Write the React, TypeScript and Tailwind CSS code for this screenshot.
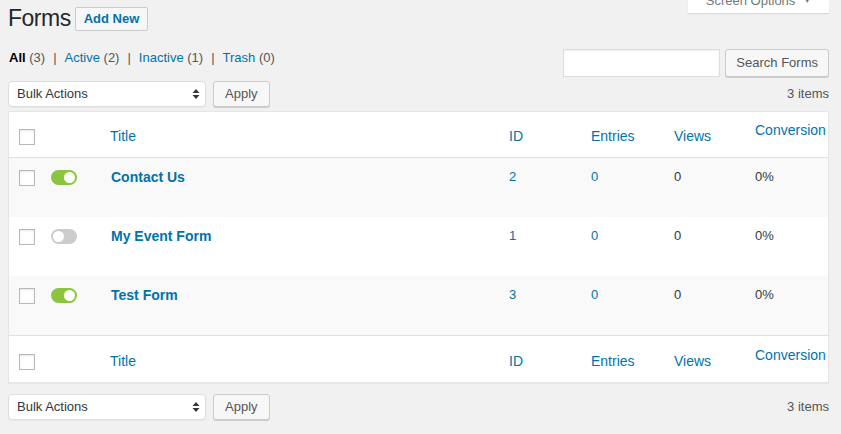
import React from "react";

const FONT = "font-['Liberation_Sans',Arial,sans-serif]";

type Form = { title: string; active: boolean; id: number; entries: number; views: number; conversion: string };

const forms: Form[] = [
  { title: "Contact Us", active: true, id: 2, entries: 0, views: 0, conversion: "0%" },
  { title: "My Event Form", active: false, id: 1, entries: 0, views: 0, conversion: "0%" },
  { title: "Test Form", active: true, id: 3, entries: 0, views: 0, conversion: "0%" },
];

const COLS = "grid grid-cols-[32px_59px_399px_82px_83px_81px_83px]";

function Checkbox() {
  return (
    <div className="w-4 h-4 bg-white border border-[#b4b9be] shadow-[inset_0_1px_2px_rgba(0,0,0,0.1)]" />
  );
}

function Toggle({ on }: { on: boolean }) {
  return (
    <div
      className={`w-[26px] h-[15px] rounded-full flex items-center px-[2px] ${
        on ? "bg-[#8bc53f] justify-end" : "bg-[#cccccc] justify-start"
      }`}
    >
      <div className="w-[11px] h-[11px] rounded-full bg-white" />
    </div>
  );
}

function BulkActions() {
  return (
    <div className="flex items-center gap-[7px]">
      <div className="w-[198px] h-[26px] bg-white border border-[#dddddd] rounded-[4px] shadow-[0_1px_1px_rgba(0,0,0,0.04)] flex items-center justify-between pl-[8px] pr-[5px]">
        <span className="text-[13px] text-[#32373c]">Bulk Actions</span>
        <svg width="8" height="12" viewBox="0 0 8 12" className="text-[#32373c]">
          <path d="M4 1 L7.5 5 L0.5 5 Z" fill="currentColor" />
          <path d="M4 11 L7.5 7 L0.5 7 Z" fill="currentColor" />
        </svg>
      </div>
      <button className="h-[26px] px-[11px] mt-px bg-[#f7f7f7] border border-[#cccccc] rounded-[3px] shadow-[0_1px_0_#cccccc] text-[13px] text-[#555555]">
        Apply
      </button>
    </div>
  );
}

function HeaderRow({ top }: { top: boolean }) {
  return (
    <div
      className={`${COLS} items-center text-[14px] text-[#0073aa] border-[#e1e1e1] ${
        top ? "h-[46px] pt-[4px] border-b" : "h-[47px] pt-[5px] border-t"
      }`}
    >
      <div className="pl-[10px]">
        <Checkbox />
      </div>
      <div />
      <div className="pl-[10px]">Title</div>
      <div className="pl-[10px]">ID</div>
      <div className="pl-[10px]">Entries</div>
      <div className="pl-[10px]">Views</div>
      <div className="pl-[10px] mb-[12px]">Conversion</div>
    </div>
  );
}

export default function App() {
  return (
    <div className={`${FONT} min-h-[434px] bg-[#f1f1f1] pl-[8px] pr-[12px] text-[13px] text-[#555555]`}>
      {/* Heading */}
      <div className="flex items-start justify-between h-[33px]">
        <div className="flex items-start">
          <h1 className="mt-[4px] text-[23px] leading-[29px] tracking-[-0.5px] text-[#23282d]">Forms</h1>
          <button className="ml-[4px] mt-[7px] h-[24px] px-[8px] bg-[#f7f7f7] border border-[#cccccc] rounded-[2px] text-[13px] font-bold text-[#0073aa]">
            Add New
          </button>
        </div>
        <div className="w-[141px] h-[13px] overflow-hidden bg-white shadow-[0_1px_1px_rgba(0,0,0,0.1)] flex justify-center">
          <div className="-mt-[12px] leading-[18px] text-[13px] text-[#72777c] flex items-center gap-[8px]">
            <span>Screen Options</span>
            <span className="text-[8px]">▼</span>
          </div>
        </div>
      </div>

      {/* Views + search */}
      <div className="mt-[16px] flex items-start justify-between">
        <div className="-mt-px h-[20px] leading-[20px] pl-px text-[13px]">
          <span className="font-bold text-black">All</span> <span>(3)</span>
          <span className="mx-[8px]">|</span>
          <span className="text-[#0073aa]">Active</span> <span>(2)</span>
          <span className="mx-[8px]">|</span>
          <span className="text-[#0073aa]">Inactive</span> <span>(1)</span>
          <span className="mx-[8px]">|</span>
          <span className="text-[#0073aa]">Trash</span> <span>(0)</span>
        </div>
        <div className="flex items-start gap-[5px]">
          <div className="w-[157px] h-[28px] bg-white border border-[#dddddd] shadow-[inset_0_1px_2px_rgba(0,0,0,0.07)]" />
          <button className="h-[28px] px-[10px] bg-[#f7f7f7] border border-[#cccccc] rounded-[3px] shadow-[0_1px_0_#cccccc] text-[13px] text-[#555555]">
            Search Forms
          </button>
        </div>
      </div>

      {/* Top tablenav */}
      <div className="mt-[3px] h-[27px] flex items-center justify-between">
        <BulkActions />
        <span>3 items</span>
      </div>

      {/* Table */}
      <div className="mt-[4px] bg-white border border-[#e5e5e5] shadow-[0_1px_1px_rgba(0,0,0,0.04)]">
        <HeaderRow top />
        {forms.map((f, i) => (
          <div key={f.id} className={`${COLS} h-[59px] items-start ${i % 2 === 0 ? "bg-[#f9f9f9]" : "bg-white"}`}>
            <div className="pl-[10px] pt-[12px]">
              <Checkbox />
            </div>
            <div className="pl-[10px] pt-[12px]">
              <Toggle on={f.active} />
            </div>
            <div className="pl-[11px] pt-[9px] leading-[20px] text-[14px] font-bold text-[#0073aa]">{f.title}</div>
            <div className="pl-[10px] pt-[9px] leading-[20px] text-[#0073aa]">{f.id}</div>
            <div className="pl-[10px] pt-[9px] leading-[20px] text-[#0073aa]">{f.entries}</div>
            <div className="pl-[10px] pt-[9px] leading-[20px] text-[#32373c]">{f.views}</div>
            <div className="pl-[10px] pt-[9px] leading-[20px] text-[#32373c]">{f.conversion}</div>
          </div>
        ))}
        <HeaderRow top={false} />
      </div>

      {/* Bottom tablenav */}
      <div className="mt-[10px] h-[27px] flex items-center justify-between">
        <BulkActions />
        <span>3 items</span>
      </div>
    </div>
  );
}
